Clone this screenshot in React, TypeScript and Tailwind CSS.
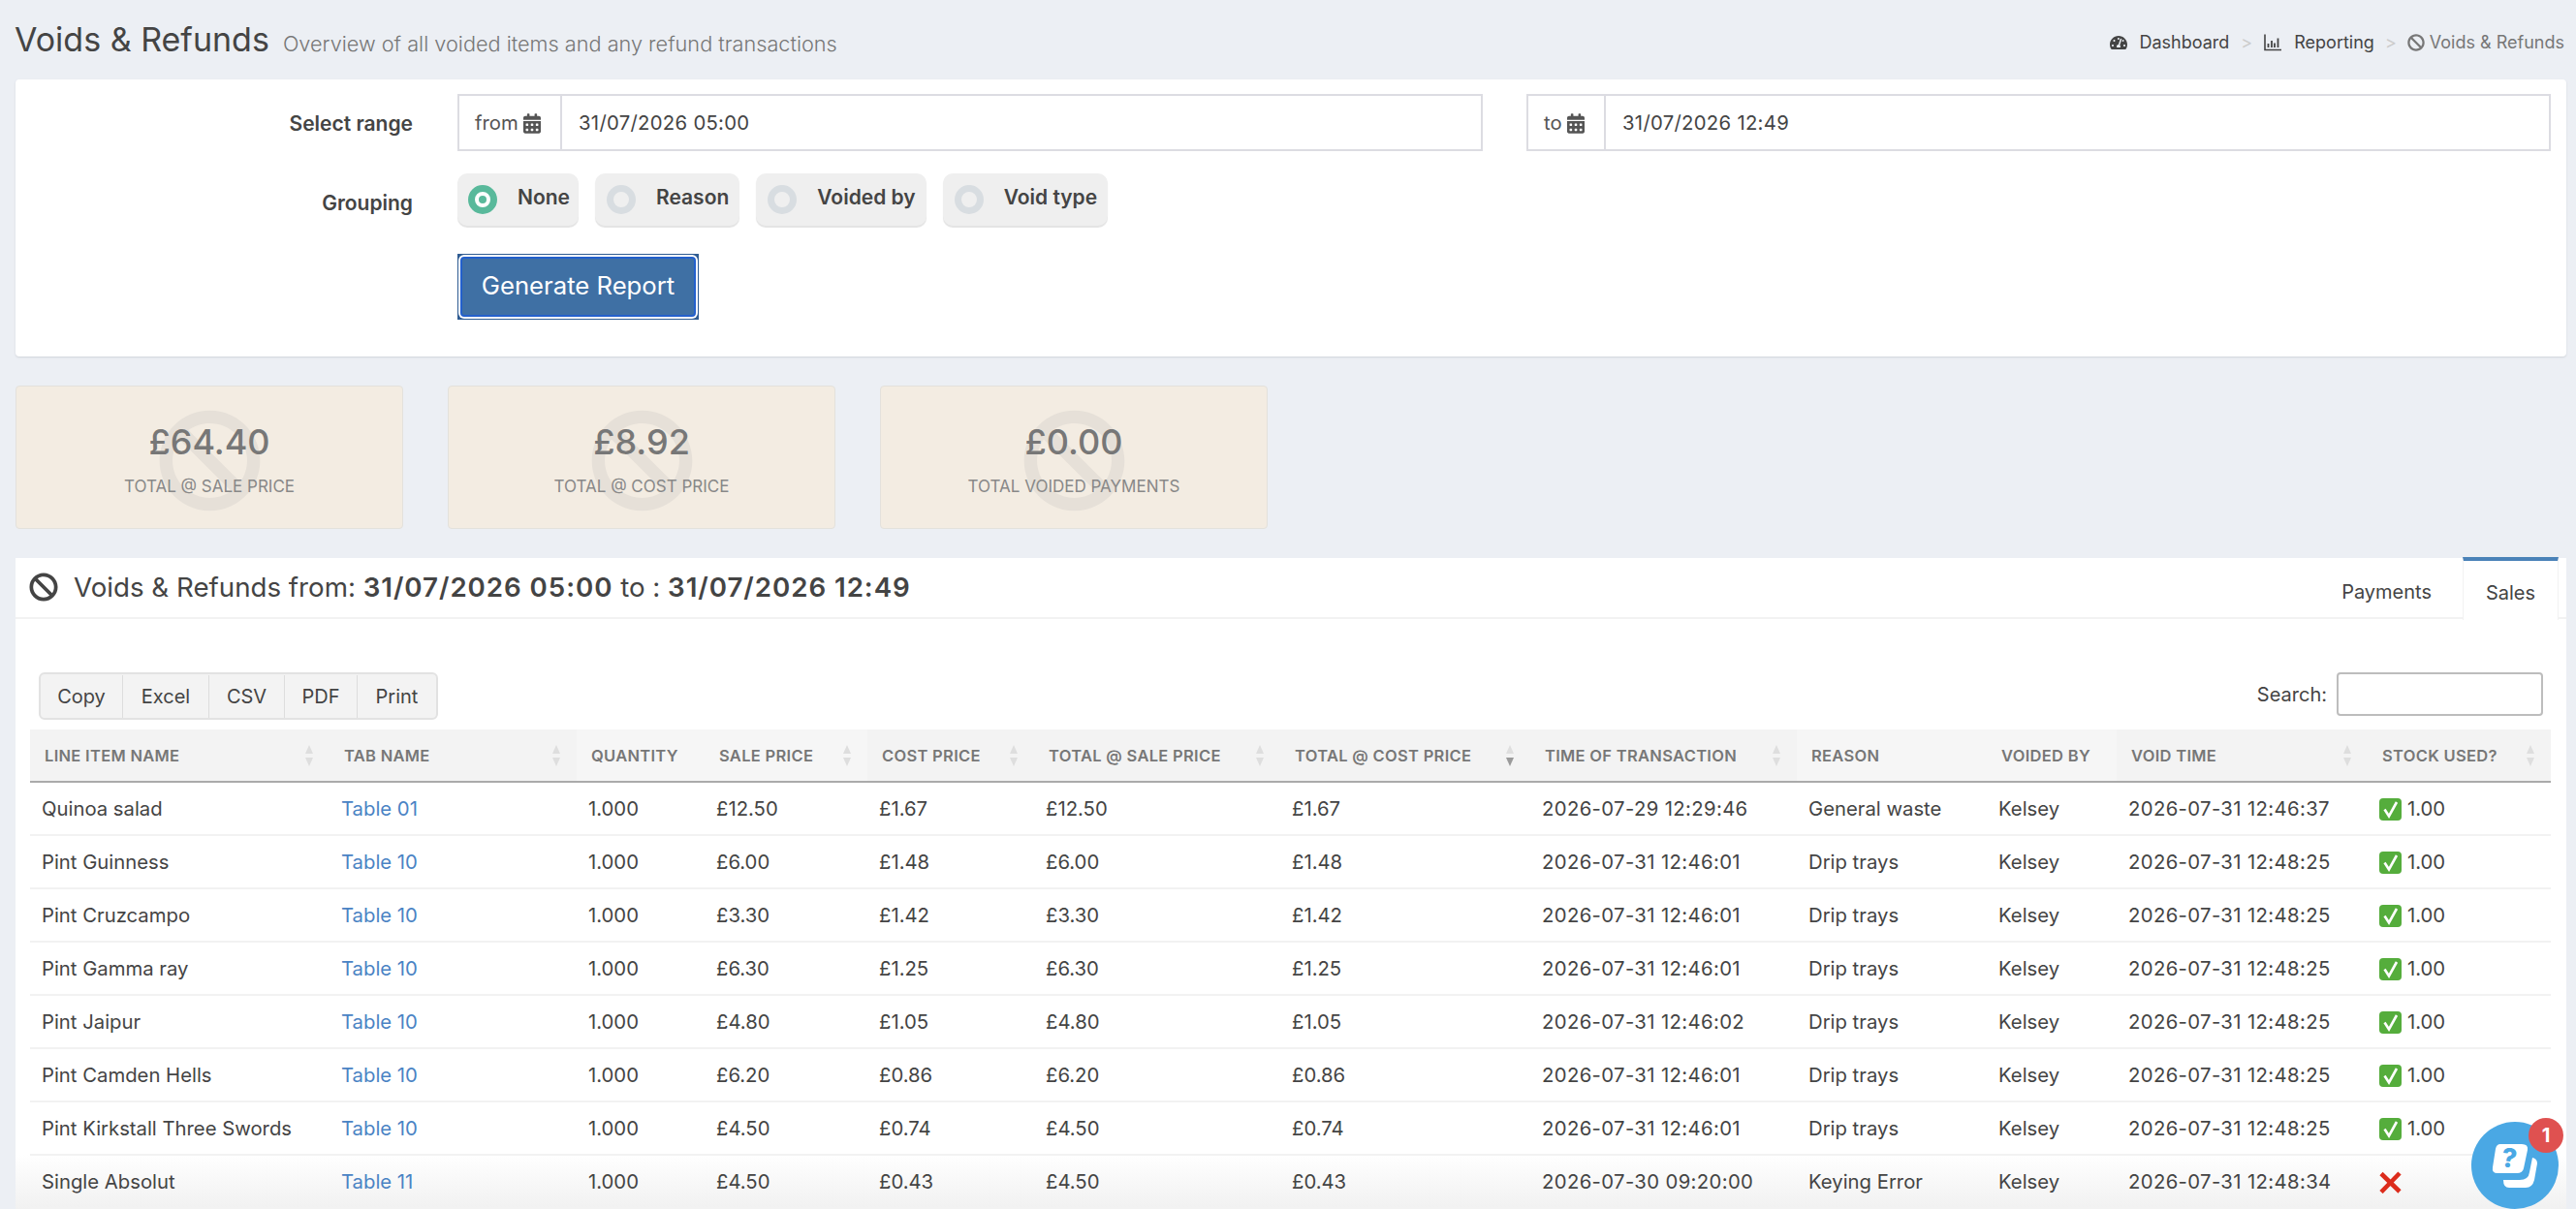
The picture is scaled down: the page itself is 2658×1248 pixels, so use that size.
import { FaBan, FaCalendarAlt, FaTachometerAlt } from 'react-icons/fa';

const rows = [
  ['Quinoa salad', 'Table 01', '£12.50', '£1.67', '2026-07-29 12:29:46', 'General waste', '2026-07-31 12:46:37', true],
  ['Pint Guinness', 'Table 10', '£6.00', '£1.48', '2026-07-31 12:46:01', 'Drip trays', '2026-07-31 12:48:25', true],
  ['Pint Cruzcampo', 'Table 10', '£3.30', '£1.42', '2026-07-31 12:46:01', 'Drip trays', '2026-07-31 12:48:25', true],
  ['Pint Gamma ray', 'Table 10', '£6.30', '£1.25', '2026-07-31 12:46:01', 'Drip trays', '2026-07-31 12:48:25', true],
  ['Pint Jaipur', 'Table 10', '£4.80', '£1.05', '2026-07-31 12:46:02', 'Drip trays', '2026-07-31 12:48:25', true],
  ['Pint Camden Hells', 'Table 10', '£6.20', '£0.86', '2026-07-31 12:46:01', 'Drip trays', '2026-07-31 12:48:25', true],
  ['Pint Kirkstall Three Swords', 'Table 10', '£4.50', '£0.74', '2026-07-31 12:46:01', 'Drip trays', '2026-07-31 12:48:25', true],
  ['Single Absolut', 'Table 11', '£4.50', '£0.43', '2026-07-30 09:20:00', 'Keying Error', '2026-07-31 12:48:34', false],
] as const;

const columns = [
  { label: 'Line item name', sort: true, bg: 'bg-[#f3f3f3]' },
  { label: 'Tab name', sort: true, bg: 'bg-[#f3f3f3]' },
  { label: 'Quantity', sort: false, bg: 'bg-[#f6f6f6]' },
  { label: 'Sale price', sort: true, bg: 'bg-[#f6f6f6]' },
  { label: 'Cost price', sort: true, bg: 'bg-[#f3f3f3]' },
  { label: 'Total @ sale price', sort: true, bg: 'bg-[#f3f3f3]' },
  { label: 'Total @ cost price', sort: true, active: true, bg: 'bg-[#f3f3f3]' },
  { label: 'Time of transaction', sort: true, bg: 'bg-[#f3f3f3]' },
  { label: 'Reason', sort: false, bg: 'bg-[#f6f6f6]' },
  { label: 'Voided by', sort: false, bg: 'bg-[#f6f6f6]' },
  { label: 'Void time', sort: true, bg: 'bg-[#f3f3f3]' },
  { label: 'Stock used?', sort: true, bg: 'bg-[#f3f3f3]' },
];

function ChartIcon({ className }: { className?: string }) {
  return (
    <svg viewBox="0 0 18 18" className={className} fill="none" stroke="currentColor">
      <path d="M1 0.5V16.5H18" strokeWidth="1.6" />
      <path d="M4.5 10v4M8 7v7M11 9.5v4.5M14.5 4.5V14" strokeWidth="1.8" />
    </svg>
  );
}

function SortArrows({ active }: { active?: boolean }) {
  return (
    <svg viewBox="0 0 8 22" className="h-[22px] w-2 shrink-0">
      <path d="M4 0L8 9H0Z" fill="#dedede" />
      <path d="M4 22L8 13H0Z" fill={active ? '#9a9a9a' : '#dedede'} />
    </svg>
  );
}

function CheckEmoji() {
  return (
    <svg viewBox="0 0 23 23" className="h-[23px] w-[23px] shrink-0">
      <rect width="23" height="23" rx="4" fill="#55ad3c" />
      <path d="M5.5 11.5L10 18.5L18 4" fill="none" stroke="#fff" strokeWidth="2.6" />
    </svg>
  );
}

function CrossEmoji() {
  return (
    <svg viewBox="0 0 23 23" className="h-[23px] w-[23px] shrink-0">
      <path d="M2 2.5L21 21M21 2L2 21.5" fill="none" stroke="#dc2c1c" strokeWidth="4.6" />
    </svg>
  );
}

function Radio({ label, on }: { label: string; on?: boolean }) {
  return (
    <div className={`flex h-[54px] items-center gap-[21px] rounded-[10px] bg-[#efefef] shadow-[0_2px_1px_#e3e3e3] ${on ? 'pl-[11px] pr-[9px]' : 'pl-3 pr-[11px]'}`}>
      {on ? (
        <span className="flex h-[30px] w-[30px] items-center justify-center rounded-full border-[7px] border-[#59b99b] bg-white">
          <span className="h-[8px] w-[8px] rounded-full bg-[#59b99b]" />
        </span>
      ) : (
        <span className="h-[30px] w-[30px] rounded-full border-[7px] border-[#d8dde1] bg-[#efefef]" />
      )}
      <span className="pb-[4px] text-[21px] font-semibold text-[#444]">{label}</span>
    </div>
  );
}

function DateInput({ label, value, addon, className }: { label: string; value: string; addon: string; className: string }) {
  return (
    <div className={`flex h-[59px] border-2 border-[#dcdce2] ${className}`}>
      <div className={`flex items-center gap-[5px] border-r-2 border-[#dcdce2] pl-[16px] pt-[1px] text-[20.3px] text-[#555] ${addon}`}>
        {label}
        <FaCalendarAlt className="h-[21px] w-[18px] text-[#555]" />
      </div>
      <div className="flex items-center pl-[17px] pt-[2px] text-[20.3px] tracking-[0.3px] text-[#444]">{value}</div>
    </div>
  );
}

function StatCard({ value, label }: { value: string; label: string }) {
  return (
    <div className="relative flex h-[148px] w-[400px] flex-col items-center overflow-hidden rounded-[4px] border border-[#e3e1dc] bg-[#f3ece2] pt-[35px]">
      <FaBan className="absolute left-[146px] top-[23px] h-[107px] w-[107px] text-[#e6e0d8]" />
      <div className="relative text-[36px] leading-[44px] font-medium text-[#777]">{value}</div>
      <div className="relative mt-[13px] text-[17px] leading-[22px] text-[#888] uppercase">{label}</div>
    </div>
  );
}

export default function App() {
  return (
    <div className="relative h-[1248px] overflow-hidden bg-[#eceff4] font-['Inter',sans-serif] text-[#444]">
      <div className="flex h-[82px] items-center justify-between pl-[15px] pr-[12px] pt-[1px]">
        <div className="flex items-baseline gap-[14px]">
          <h1 className="text-[34px] leading-[40px] font-normal text-[#444]">Voids &amp; Refunds</h1>
          <span className="text-[21.7px] font-light text-[#777]">Overview of all voided items and any refund transactions</span>
        </div>
        <div className="flex items-center pt-[4px] text-[18px] text-[#444]">
          <FaTachometerAlt className="mr-[13px] h-[18px] w-[18px]" />
          Dashboard
          <span className="mx-[12px] text-[#ccc]">&gt;</span>
          <ChartIcon className="mr-[13px] h-[18px] w-[18px]" />
          Reporting
          <span className="mx-[11px] text-[#ccc]">&gt;</span>
          <FaBan className="mr-[5px] h-[18px] w-[18px] text-[#777]" />
          <span className="text-[#777]">Voids &amp; Refunds</span>
        </div>
      </div>

      <div className="ml-4 mr-[10px] h-[286px] rounded-[4px] bg-white pt-[15px] shadow-[0_1px_2px_#cfd3d9]">
        <div className="flex items-center">
          <div className="w-[410px] pt-[2px] text-right text-[21px] font-semibold text-[#444]">Select range</div>
          <DateInput label="from" value="31/07/2026 05:00" addon="w-[106px]" className="ml-[46px] w-[1058px]" />
          <DateInput label="to" value="31/07/2026 12:49" addon="w-[80px]" className="ml-[45px] w-[1057px]" />
        </div>
        <div className="mt-[23px] flex items-center">
          <div className="w-[410px] pt-[8px] text-right text-[21px] font-semibold text-[#444]">Grouping</div>
          <div className="ml-[46px] flex gap-[17px]">
            <Radio label="None" on />
            <Radio label="Reason" />
            <Radio label="Voided by" />
            <Radio label="Void type" />
          </div>
        </div>
        <div className="ml-[456px] mt-[29px] w-[249px] bg-[#2f5c92] p-[3px]">
          <button className="h-[62px] w-full rounded-[4px] border-2 border-[#2360cc] bg-[#3f70a4] pb-[2px] text-[25.7px] text-white shadow-[0_0_0_2px_#fff]">
            Generate Report
          </button>
        </div>
      </div>

      <div className="ml-4 mt-[30px] flex gap-[46px]">
        <StatCard value="£64.40" label="Total @ sale price" />
        <StatCard value="£8.92" label="Total @ cost price" />
        <StatCard value="£0.00" label="Total voided payments" />
      </div>

      <div className="ml-4 mr-[10px] mt-[30px] h-[672px] bg-[linear-gradient(to_bottom,#fff_0,#fff_616px,#f1f1f1_100%)]">
        <div className="flex h-[63px] items-center justify-between border-b-2 border-[#f2f2f2] pl-[14px] pr-[8px]">
          <div className="flex items-center gap-[16px] text-[27.7px] text-[#444]">
            <FaBan className="h-[30px] w-[30px]" />
            <span>
              Voids &amp; Refunds from: <b className="font-semibold tracking-[0.95px]">31/07/2026 05:00</b> to : <b className="font-semibold tracking-[0.95px]">31/07/2026 12:49</b>
            </span>
          </div>
          <div className="flex h-[63px] items-stretch text-[20px]">
            <div className="flex items-center px-[32px] pt-[9px]">Payments</div>
            <div className="z-10 -mb-[2px] flex h-[65px] w-[99px] items-center justify-center border-x border-t-4 border-x-[#f2f2f2] border-t-[#4a82b8] bg-white pt-[4px]">
              Sales
            </div>
          </div>
        </div>

        <div className="px-[15px] pt-[55px]">
          <div className="flex items-start justify-between px-[9px]">
            <div className="flex h-[49px] overflow-hidden rounded-[6px] border-2 border-[#e2e2e2] bg-[#f3f3f3] pt-[1px] text-[20px] text-[#444]">
              <div className="flex w-[85px] items-center justify-center border-r border-[#dddddd]">Copy</div>
              <div className="flex w-[89px] items-center justify-center border-r border-[#dddddd]">Excel</div>
              <div className="flex w-[78px] items-center justify-center border-r border-[#dddddd]">CSV</div>
              <div className="flex w-[75px] items-center justify-center border-r border-[#dddddd]">PDF</div>
              <div className="flex w-[81px] items-center justify-center">Print</div>
            </div>
            <div className="flex items-center gap-[10px] text-[20px] text-[#444]">
              Search:
              <input className="h-[45px] w-[213px] rounded-[4px] border-2 border-[#bdbdbd] bg-white" />
            </div>
          </div>

          <table className="mt-[10px] w-[2601px] table-fixed border-collapse text-[20.3px]">
            <colgroup>
              <col className="w-[309px]" />
              <col className="w-[255px]" />
              <col className="w-[132px]" />
              <col className="w-[168px]" />
              <col className="w-[172px]" />
              <col className="w-[254px]" />
              <col className="w-[258px]" />
              <col className="w-[275px]" />
              <col className="w-[196px]" />
              <col className="w-[134px]" />
              <col className="w-[259px]" />
              <col className="w-[189px]" />
            </colgroup>
            <thead>
              <tr className="h-[54px] border-b-2 border-[#aaaaaa]">
                {columns.map((c) => (
                  <th key={c.label} className={`pl-[15px] text-left ${c.bg}`}>
                    <div className="flex items-center justify-between pr-[17px] text-[16.5px] font-semibold tracking-[0.3px] whitespace-nowrap text-[#777] uppercase">
                      <span className="pt-[2px]">{c.label}</span>
                      {c.sort && <SortArrows active={c.active} />}
                    </div>
                  </th>
                ))}
              </tr>
            </thead>
            <tbody>
              {rows.map((r) => (
                <tr key={r[0]} className="h-[55px] border-b-2 border-[#f2f2f2]">
                  <td className="pl-[12px] pt-[2px]">{r[0]}</td>
                  <td className="pl-[12px] pt-[2px] text-[#4a83c4]">{r[1]}</td>
                  <td className="pl-[12px] pt-[2px]">1.000</td>
                  <td className="pl-[12px] pt-[2px]">{r[2]}</td>
                  <td className="pl-[12px] pt-[2px]">{r[3]}</td>
                  <td className="pl-[12px] pt-[2px]">{r[2]}</td>
                  <td className="pl-[12px] pt-[2px]">{r[3]}</td>
                  <td className="pl-[12px] pt-[2px] tracking-[0.37px]">{r[4]}</td>
                  <td className="pl-[12px] pt-[2px]">{r[5]}</td>
                  <td className="pl-[12px] pt-[2px]">Kelsey</td>
                  <td className="pl-[12px] pt-[2px] tracking-[0.37px]">{r[6]}</td>
                  <td className="pl-[12px] pt-[2px]">
                    <div className="flex items-center gap-[6px]">
                      {r[7] ? <CheckEmoji /> : <CrossEmoji />}
                      {r[7] && '1.00'}
                    </div>
                  </td>
                </tr>
              ))}
            </tbody>
          </table>
        </div>
      </div>

      <div className="absolute left-[2550px] top-[1158px] h-[90px] w-[90px] rounded-full bg-[#4aa8e4]">
        <svg viewBox="0 0 90 90" className="h-[90px] w-[90px]">
          <path d="M30 23H52Q59 23 58 29L54 48Q53 53 47 53H27Q21 53 22 47L25 28Q26 23 30 23Z" fill="#fff" />
          <path d="M63 37Q68 38 68 43L65 60Q63 68 56 68H39Q33 68 33 60H50Q59 60 60 52Z" fill="#fff" />
          <text x="39" y="47" textAnchor="middle" fontFamily="Inter" fontWeight="800" fontSize="27" fill="#4aa8e4" transform="rotate(8 39 38)">?</text>
        </svg>
      </div>
      <div className="absolute left-[2609px] top-[1154px] flex h-9 w-9 items-center justify-center rounded-full bg-[#df5150] text-[20px] font-bold text-white">1</div>
    </div>
  );
}
